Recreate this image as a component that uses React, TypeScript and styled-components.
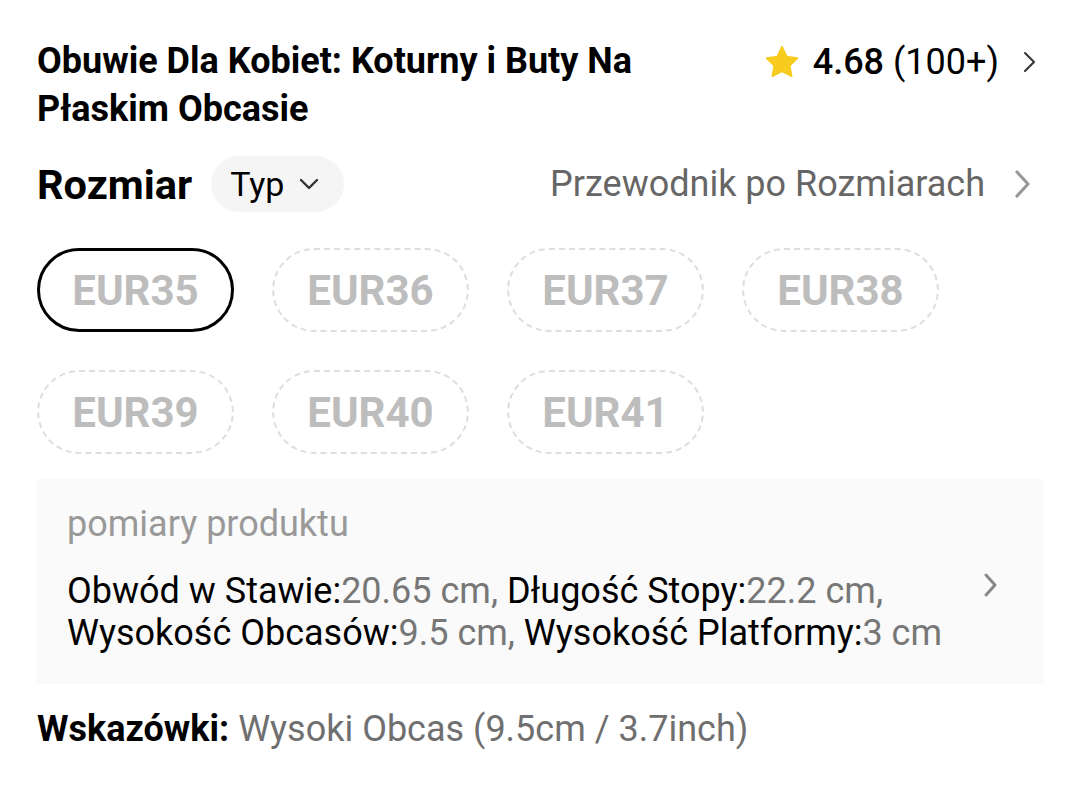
import React from 'react'
import styled, { createGlobalStyle } from 'styled-components'

const GlobalStyle = createGlobalStyle`
    body {
        margin: 0;
        background: #ffffff;
        font-family: Roboto, "Noto Sans", sans-serif;
        color: #000;
    }
`

const Page = styled.div`
    width: 1080px;
    height: 792px;
    box-sizing: border-box;
    padding: 37px 36px 0 37px;
    display: flex;
    flex-direction: column;
`

const Header = styled.div`
    display: flex;
    justify-content: space-between;
    align-items: flex-start;
`

const Title = styled.h1`
    margin: 0;
    width: 660px;
    font-weight: 700;
    font-size: 36px;
    line-height: 48px;
`

const Rating = styled.div`
    display: flex;
    align-items: center;
    height: 50px;
    padding-right: 6px;
    font-size: 36px;
`

const StarIcon = styled.svg`
    display: block;
    margin-right: 13px;
`

const Score = styled.span`
    font-weight: 500;
`

const Count = styled.span`
    font-weight: 400;
`

const Chevron = styled.svg<{ $color?: string; $weight?: number }>`
    display: block;
    flex-shrink: 0;
    fill: none;
    stroke: ${({ $color }) => $color || '#333'};
    stroke-width: ${({ $weight }) => $weight || 2};
    stroke-linecap: round;
    stroke-linejoin: round;
`

const SizeBar = styled.div`
    display: flex;
    align-items: center;
    margin-top: 23px;
    height: 56px;
`

const SizeLabel = styled.div`
    font-weight: 700;
    font-size: 41.5px;
    margin-right: 19px;
`

const TypePill = styled.div`
    display: flex;
    align-items: center;
    gap: 14px;
    height: 56px;
    padding: 0 24px 0 19px;
    border-radius: 28px;
    background: #f5f5f5;
    font-size: 34px;
`

const Guide = styled.div`
    margin-left: auto;
    display: flex;
    align-items: center;
    gap: 28px;
    color: #666;
    font-size: 36px;
    padding-right: 11px;
`

const SizeGrid = styled.div`
    display: grid;
    grid-template-columns: repeat(4, 197px);
    column-gap: 38px;
    row-gap: 38px;
    margin-top: 36px;
`

const SizeChip = styled.div<{ $selected?: boolean }>`
    height: 84px;
    box-sizing: border-box;
    border-radius: 42px;
    border: ${({ $selected }) => ($selected ? '3px solid #000' : '2px dashed #dedede')};
    display: flex;
    align-items: center;
    justify-content: center;
    color: #bdbdbd;
    font-weight: 700;
    font-size: 42px;
`

const Measures = styled.div`
    margin-top: 25px;
    margin-left: -1px;
    background: #fafafa;
    height: 205px;
    box-sizing: border-box;
    padding: 25px 31px 0 31px;
    display: flex;
    flex-direction: column;
`

const MeasuresTitle = styled.div`
    color: #999;
    font-size: 36px;
    line-height: 40px;
`

const MeasuresRow = styled.div`
    display: flex;
    justify-content: space-between;
    align-items: flex-start;
    margin-top: 26px;
`

const MeasuresText = styled.div`
    font-size: 36px;
    line-height: 42px;
    color: #000;
    white-space: nowrap;
`

const Value = styled.span`
    color: #777;
`

const Tips = styled.div`
    margin-top: 23px;
    font-size: 36px;
    line-height: 44px;
    white-space: nowrap;
`

const TipsLabel = styled.span`
    font-weight: 700;
`

const TipsValue = styled.span`
    color: #6f6f6f;
`

const Star = () => (
    <StarIcon width="36" height="34" viewBox="0 0 24 23">
        <path
            d="M12 1.2l3.2 6.6 7.2 1-5.2 5.1 1.3 7.2L12 17.7l-6.5 3.4 1.3-7.2L1.6 8.8l7.2-1z"
            fill="#f7cc1e"
            stroke="#f7cc1e"
            strokeWidth="1.2"
            strokeLinejoin="round"
        />
    </StarIcon>
)

const sizes = ['EUR35', 'EUR36', 'EUR37', 'EUR38', 'EUR39', 'EUR40', 'EUR41']

const measureLines: [string, string][][] = [
    [['Obwód w Stawie:', '20.65 cm, '], ['Długość Stopy:', '22.2 cm,']],
    [['Wysokość Obcasów:', '9.5 cm, '], ['Wysokość Platformy:', '3 cm']],
]

const App: React.FC = () => {
    return (
        <>
            <GlobalStyle />
            <Page>
                <Header>
                    <Title>Obuwie Dla Kobiet: Koturny i Buty Na Płaskim Obcasie</Title>
                    <Rating>
                        <Star />
                        <div>
                            <Score>4.68</Score> <Count>(100+)</Count>
                        </div>
                        <Chevron width="16" height="26" viewBox="0 0 16 26" style={{ marginLeft: 23 }}>
                            <path d="M3 4l9 9-9 9" />
                        </Chevron>
                    </Rating>
                </Header>

                <SizeBar>
                    <SizeLabel>Rozmiar</SizeLabel>
                    <TypePill>
                        Typ
                        <Chevron width="22" height="14" viewBox="0 0 22 14" $weight={2.4}>
                            <path d="M3 3l8 8 8-8" />
                        </Chevron>
                    </TypePill>
                    <Guide>
                        Przewodnik po Rozmiarach
                        <Chevron $color="#999" $weight={3.2} width="20" height="30" viewBox="0 0 20 30">
                            <path d="M4 3l11 12-11 12" />
                        </Chevron>
                    </Guide>
                </SizeBar>

                <SizeGrid>
                    {sizes.map((s, i) => (
                        <SizeChip key={s} $selected={i === 0}>{s}</SizeChip>
                    ))}
                </SizeGrid>

                <Measures>
                    <MeasuresTitle>pomiary produktu</MeasuresTitle>
                    <MeasuresRow>
                        <MeasuresText>
                            {measureLines.map((line, li) => (
                                <div key={li}>
                                    {line.map(([k, v]) => (
                                        <React.Fragment key={k}>{k}<Value>{v}</Value></React.Fragment>
                                    ))}
                                </div>
                            ))}
                        </MeasuresText>
                        <Chevron $color="#888" $weight={3} width="18" height="26" viewBox="0 0 18 26" style={{ marginTop: 2, marginRight: 13 }}>
                            <path d="M4 3l9 10-9 10" />
                        </Chevron>
                    </MeasuresRow>
                </Measures>

                <Tips>
                    <TipsLabel>Wskazówki:</TipsLabel> <TipsValue>Wysoki Obcas (9.5cm / 3.7inch)</TipsValue>
                </Tips>
            </Page>
        </>
    )
}

export default App
